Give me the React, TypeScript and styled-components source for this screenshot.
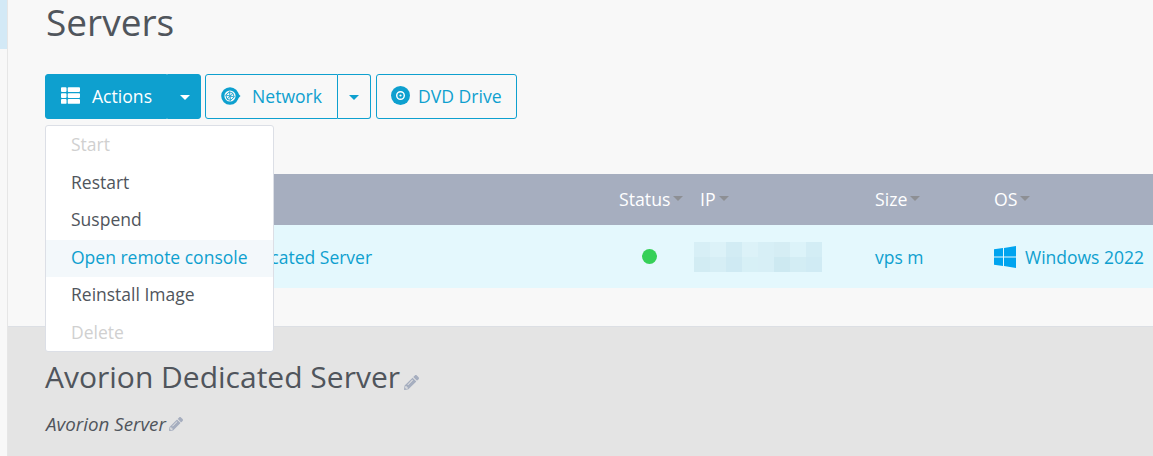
import * as React from 'react';
import styled, {createGlobalStyle} from 'styled-components';
import {FaPencilAlt, FaThList} from 'react-icons/fa';

const colors = {
    blue: '#0ea0cf',
    text: '#50555c',
    muted: '#d0d0d0',
    pageBg: '#f8f8f8',
    lowerBg: '#e4e4e4',
};

const GlobalStyle = createGlobalStyle`
    html, body {
        margin: 0;
        padding: 0;
        height: 100%;
        overflow: hidden;
        background: ${colors.pageBg};
        font-family: "Open Sans", "Liberation Sans", sans-serif;
    }
`;

const Layout = styled.div`
    display: flex;
    width: 1153px;
    height: 456px;
    overflow: hidden;
`;

const Rail = styled.div`
    width: 7px;
    flex: none;
    background: #f8f8f8;
    border-right: solid 1px #e6e6e6;
`;

const RailActive = styled.div`
    height: 49px;
    background: #d3e9f6;
`;

const Main = styled.div`
    flex: 1;
    min-width: 0;
    display: flex;
    flex-direction: column;
    position: relative;
`;

const Upper = styled.section`
    flex: none;
    height: 327px;
    padding-left: 37px;
    box-sizing: border-box;
    border-bottom: solid 1px #dcdfe4;
`;

const Title = styled.h1`
    margin: 0;
    height: 74px;
    font-size: 37px;
    line-height: 44px;
    font-weight: 400;
    color: ${colors.text};
    padding-left: 1px;
`;

const Toolbar = styled.div`
    display: flex;
    height: 45px;
`;

const Split = styled.div`
    display: flex;
    margin-right: ${({gap}: {gap: number}) => gap}px;
`;

const Btn = styled.button<{solid?: boolean; width: number; join?: 'left' | 'right'}>`
    display: flex;
    align-items: center;
    box-sizing: border-box;
    width: ${({width}) => width}px;
    height: 45px;
    padding: 0 0 2px;
    font: inherit;
    font-size: 17.6px;
    color: ${({solid}) => (solid ? '#fff' : colors.blue)};
    background: ${({solid}) => (solid ? colors.blue : 'transparent')};
    border: solid 1px ${colors.blue};
    border-radius: ${({join}) =>
        join === 'left' ? '3px 0 0 3px' : join === 'right' ? '0 3px 3px 0' : '3px'};
    ${({join, solid}) => (join === 'right' && !solid ? 'border-left: none;' : '')}
`;

const BtnIcon = styled.span<{left: number; right: number}>`
    display: flex;
    margin-left: ${({left}) => left}px;
    margin-right: ${({right}) => right}px;
`;

const Caret = styled.span<{solid?: boolean}>`
    display: block;
    width: 0;
    height: 0;
    margin: 3px auto 0 ${({solid}) => (solid ? '12px' : 'auto')};
    border-left: solid 5px transparent;
    border-right: solid 5px transparent;
    border-top: solid 5px ${({solid}) => (solid ? '#fff' : colors.blue)};
`;

const Table = styled.div`
    margin-top: 55px;
`;

const Cols = styled.div`
    display: grid;
    grid-template-columns: 574px 81px 175px 119px 1fr;
    align-items: center;
`;

const HeadRow = styled(Cols)`
    height: 51px;
    padding-bottom: 2px;
    box-sizing: border-box;
    background: #a6aebf;
    color: #fff;
    font-size: 17.7px;
`;

const BodyRow = styled(Cols)`
    height: 63px;
    background: #e4f8fd;
    color: ${colors.blue};
    font-size: 17.5px;
`;

const HeadCell = styled.div`
    display: flex;
    align-items: center;
`;

const SortCaret = styled.span`
    width: 0;
    height: 0;
    margin-left: 3px;
    border-left: solid 5px transparent;
    border-right: solid 5px transparent;
    border-top: solid 5px #8d8f94;
`;

const NameCell = styled.div`
    padding-left: 120px;
`;

const StatusCell = styled.div`
    padding-left: 23px;
`;

const StatusDot = styled.div`
    width: 15px;
    height: 15px;
    border-radius: 50%;
    background: #36d058;
`;

const IpBlur = styled.div`
    display: grid;
    grid-template-columns: repeat(8, 16px);
    grid-auto-rows: 15px;
    width: 128px;
    margin-left: -6px;
`;

const IpPixel = styled.div<{shade: string}>`
    background: ${({shade}) => shade};
`;

const OsCell = styled.div`
    display: flex;
    align-items: center;
    gap: 9px;
`;

const Lower = styled.section`
    flex: 1;
    background: ${colors.lowerBg};
    padding: 30px 0 0 37px;
    color: ${colors.text};
`;

const ServerName = styled.h2`
    display: flex;
    align-items: flex-end;
    margin: 0;
    height: 40px;
    font-size: 30px;
    line-height: 40px;
    font-weight: 400;
`;

const ServerNote = styled.div`
    display: flex;
    align-items: center;
    margin-top: 15px;
    padding-left: 1px;
    font-size: 18.8px;
    line-height: 24px;
    font-style: italic;
`;

const Pencil = styled(FaPencilAlt)<{size: number}>`
    flex: none;
    color: #a6aebf;
`;

const NamePencil = styled(Pencil)`
    margin: 0 0 7px 4px;
`;

const NotePencil = styled(Pencil)`
    margin: 0 0 1px 3px;
`;

const Menu = styled.ul`
    position: absolute;
    left: 37px;
    top: 125px;
    width: 229px;
    height: 227px;
    box-sizing: border-box;
    margin: 0;
    padding: 1px 0;
    list-style: none;
    background: #fff;
    border: solid 1px #dcdfe6;
    border-radius: 3px;
`;

const MenuItem = styled.li<{state?: 'off' | 'hover'}>`
    height: 37.5px;
    line-height: 35px;
    padding-left: 25px;
    font-size: 17.5px;
    color: ${({state}) =>
        state === 'off' ? colors.muted : state === 'hover' ? colors.blue : colors.text};
    background: ${({state}) => (state === 'hover' ? '#f3f8fb' : 'transparent')};
`;

const NetworkIcon = () => (
    <svg width="21" height="18" viewBox="0 0 21 18">
        <circle cx="9" cy="9" r="7.2" fill="none" stroke={colors.blue} strokeWidth="3.2" />
        <path d="M17 6.5 19.5 9 17 11.5Z" fill={colors.blue} />
        <path d="M4.8 8 8.5 4.8l3.5 1.5 1.2 3.7-3.7 3.4-3.5-1.2zM8.5 4.8 9.5 13.4M4.8 8l8.4 2M6 12.2l6-5.9" fill="none" stroke={colors.blue} strokeWidth="0.9" />
    </svg>
);

const DiscIcon = () => (
    <svg width="19" height="19" viewBox="0 0 19 19">
        <circle cx="9.5" cy="9.5" r="9.5" fill={colors.blue} />
        <circle cx="9.5" cy="9.5" r="3.8" fill="none" stroke="#fff" strokeWidth="1.4" />
        <circle cx="9.5" cy="9.5" r="1.1" fill="#fff" />
    </svg>
);

const WindowsIcon = () => (
    <svg width="22" height="22" viewBox="0 0 22 22">
        <path
            d="M0 3.3 9 2v8.4H0zM10 1.9 22 0v10.4H10zM0 11.5h9v8.5L0 18.7zM10 11.5h12V22l-12-1.9z"
            fill="#00a4ef"
        />
    </svg>
);

const ipShades = [
    '#d7eff6', '#dcf2f8', '#d2ecf4', '#dcf2f8', '#d7eff6', '#d5edf4', '#dcf3f9', '#d3edf5',
    '#d2ecf3', '#d6eef5', '#cfeaf3', '#d7f0f6', '#d7eff6', '#cde9f1', '#d3edf4', '#d0ebf4',
];

const menuItems: {label: string; state?: 'off' | 'hover'}[] = [
    {label: 'Start', state: 'off'},
    {label: 'Restart'},
    {label: 'Suspend'},
    {label: 'Open remote console', state: 'hover'},
    {label: 'Reinstall Image'},
    {label: 'Delete', state: 'off'},
];

const App: React.FC = () => {
    return (
        <Layout>
            <GlobalStyle />
            <Rail>
                <RailActive />
            </Rail>
            <Main>
                <Upper>
                    <Title>Servers</Title>
                    <Toolbar>
                        <Split gap={4}>
                            <Btn solid width={122} join="left">
                                <BtnIcon left={15} right={12}>
                                    <FaThList size={19} />
                                </BtnIcon>
                                Actions
                            </Btn>
                            <Btn solid width={34} join="right">
                                <Caret solid />
                            </Btn>
                        </Split>
                        <Split gap={5}>
                            <Btn width={133} join="left">
                                <BtnIcon left={15} right={10}>
                                    <NetworkIcon />
                                </BtnIcon>
                                Network
                            </Btn>
                            <Btn width={33} join="right">
                                <Caret />
                            </Btn>
                        </Split>
                        <Btn width={141}>
                            <BtnIcon left={14} right={8}>
                                <DiscIcon />
                            </BtnIcon>
                            DVD Drive
                        </Btn>
                    </Toolbar>
                    <Table>
                        <HeadRow>
                            <div />
                            <HeadCell>Status<SortCaret /></HeadCell>
                            <HeadCell>IP<SortCaret /></HeadCell>
                            <HeadCell>Size<SortCaret /></HeadCell>
                            <HeadCell>OS<SortCaret /></HeadCell>
                        </HeadRow>
                        <BodyRow>
                            <NameCell>Avorion Dedicated Server</NameCell>
                            <StatusCell>
                                <StatusDot />
                            </StatusCell>
                            <IpBlur>
                                {ipShades.map((shade, i) => (
                                    <IpPixel key={i} shade={shade} />
                                ))}
                            </IpBlur>
                            <div>vps m</div>
                            <OsCell>
                                <WindowsIcon />
                                Windows 2022
                            </OsCell>
                        </BodyRow>
                    </Table>
                </Upper>
                <Lower>
                    <ServerName>
                        Avorion Dedicated Server
                        <NamePencil size={15} />
                    </ServerName>
                    <ServerNote>
                        Avorion Server
                        <NotePencil size={14} />
                    </ServerNote>
                </Lower>
                <Menu>
                    {menuItems.map((item) => (
                        <MenuItem key={item.label} state={item.state}>
                            {item.label}
                        </MenuItem>
                    ))}
                </Menu>
            </Main>
        </Layout>
    );
};

export default App;
